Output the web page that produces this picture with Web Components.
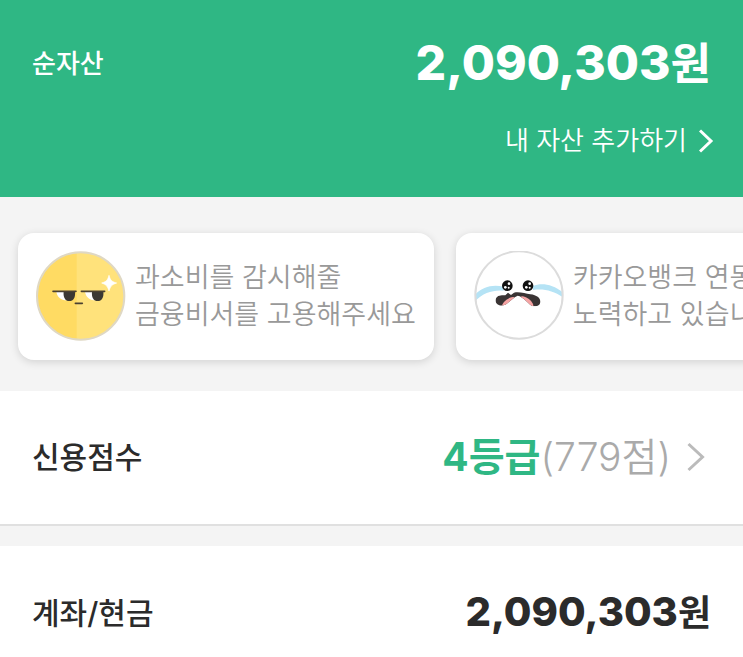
<!DOCTYPE html>
<html lang="ko">
<head>
<meta charset="utf-8">
<meta name="viewport" content="width=device-width, initial-scale=1">
<title>내 자산</title>
<style>
    body {
        margin: 0;
        background: #f4f4f4;
        color: #2b2b2b;
        font-family: Inter, "Noto Sans CJK KR", sans-serif;
    }
</style>
</head>
<body>
<asset-page></asset-page>

<script>
////////////////////////////
// StaticElement
////////////////////////////

class StaticElement extends HTMLElement {
    constructor() {
        super();
        this.attachShadow({ mode: 'open' });
    }

    connectedCallback() {
        this.shadowRoot.innerHTML = `<style>${this.style()}</style>${this.render()}`;
    }

    style() {
        return '';
    }

    render() {
        return '';
    }
}

////////////////////////////
// ChevronIcon
////////////////////////////

class ChevronIcon extends StaticElement {
    style() {
        return `
            :host { display: block; flex: none; width: 16px; height: 24px; }
            :host([large]) { width: 24px; height: 30px; }
            svg { display: block; width: 100%; height: 100%; }
        `;
    }

    render() {
        if (this.hasAttribute('large')) {
            return `<svg viewBox="0 0 24 30" aria-hidden="true">
                <path d="M1.500 2L15.500 15L1.500 28" fill="none" stroke="#bbb" stroke-width="3"/>
            </svg>`;
        }
        return `<svg viewBox="0 0 16 24" aria-hidden="true">
            <path d="M1 1.500L12 12L1 22.500" fill="none" stroke="currentColor" stroke-width="3"/>
        </svg>`;
    }
}

customElements.define('chevron-icon', ChevronIcon);

////////////////////////////
// FaceIcon
////////////////////////////

const faces = {
    smug: `<svg viewBox="18 21 270 270" aria-hidden="true">
        <circle cx="152" cy="156" r="131" fill="#ffe27b"/>
        <path d="M140 25.500A131 131 0 0 0 140 286.500Z" fill="#ffdb63"/>
        <circle cx="152" cy="156" r="131" fill="none" stroke="#dfd8c4" stroke-width="6"/>
        <path d="M79 143H134C134 158 125 169 110 169C93 169 81 158 79 143Z" fill="#fff"/>
        <path d="M101 143H135C137 160 130 171 118 171C106 171 99 160 101 143Z" fill="#3b3833"/>
        <path d="M165 143H219C219 158 210 169 195 169C179 169 167 158 165 143Z" fill="#fff"/>
        <path d="M186 143H220C222 160 215 171 203 171C191 171 184 160 186 143Z" fill="#3b3833"/>
        <path d="M69 142H138M154 142H224M136 178H157" fill="none" stroke="#4a4030" stroke-width="5" stroke-linecap="round"/>
        <path d="M237 94C241 109 245 113 260 117C245 122 241 127 237 141C233 127 229 122 215 117C229 113 233 109 237 94Z" fill="#fff" stroke="#fff" stroke-width="2"/>
    </svg>`,
    crying: `<svg viewBox="17 20 270 270" aria-hidden="true">
        <clipPath id="face"><circle cx="152" cy="152" r="131"/></clipPath>
        <clipPath id="mouth"><path d="M82 166C84 153 99 152 111 153L119 145L128 152L137 145C153 141 171 148 186 150C206 152 217 162 216 173C215 186 200 188 190 184C178 177 165 157 148 154C136 158 125 172 111 181C98 187 80 182 82 166Z"/></clipPath>
        <circle cx="152" cy="152" r="131" fill="#fff"/>
        <g clip-path="url(#face)" fill="#b5e3f5">
            <path d="M15 157C38 127 72 119 106 127V139C74 136 42 146 18 173Z"/>
            <path d="M194 125C220 114 255 119 290 149V163C258 140 228 132 194 137Z"/>
        </g>
        <circle cx="152" cy="152" r="131" fill="none" stroke="#dcdcdc" stroke-width="6"/>
        <circle cx="117" cy="124" r="16" fill="#111"/>
        <circle cx="179" cy="124" r="16" fill="#111"/>
        <g fill="#fff">
            <circle cx="122" cy="118" r="4"/><circle cx="111" cy="129" r="4"/><circle cx="121" cy="130" r="3"/>
            <circle cx="184" cy="118" r="4"/><circle cx="174" cy="129" r="4"/><circle cx="184" cy="130" r="3"/>
        </g>
        <g clip-path="url(#mouth)">
            <path d="M78 138H222V192H78Z" fill="#3a3434"/>
            <ellipse cx="121" cy="175" rx="24" ry="11" transform="rotate(-38 121 175)" fill="#f5a3a3"/>
            <ellipse cx="175" cy="173" rx="24" ry="11" transform="rotate(38 175 173)" fill="#f5a3a3"/>
        </g>
    </svg>`,
};

class FaceIcon extends StaticElement {
    style() {
        return `
            :host { display: block; flex: none; width: 90px; height: 90px; }
            svg { display: block; width: 100%; height: 100%; }
        `;
    }

    render() {
        return faces[this.getAttribute('name')];
    }
}

customElements.define('face-icon', FaceIcon);

////////////////////////////
// AssetHeader
////////////////////////////

class AssetHeader extends StaticElement {
    style() {
        return `
            :host { display: block; background: #2fb784; color: #fff; padding: 31px 28px 38px 32px; }
            .top { display: flex; align-items: center; justify-content: space-between; padding-right: 4px; }
            ::slotted(h1) { margin: 0; font-size: 26px; line-height: 64px; font-weight: 500; }
            .link { display: flex; justify-content: flex-end; margin-top: 26px; }
        `;
    }

    render() {
        return `
            <div class="top"><slot name="label"></slot><slot name="amount"></slot></div>
            <div class="link"><slot name="link"></slot></div>
        `;
    }
}

customElements.define('asset-header', AssetHeader);

////////////////////////////
// MoneyAmount
////////////////////////////

class MoneyAmount extends StaticElement {
    style() {
        return `
            :host { display: block; font-size: 40px; line-height: 48px; font-weight: 800; white-space: nowrap; }
            :host([large]) { font-size: 48px; line-height: 64px; }
            .unit { font-size: 36px; font-weight: 700; }
            :host([large]) .unit { font-size: 44px; }
        `;
    }

    render() {
        return `<slot></slot><span class="unit">원</span>`;
    }
}

customElements.define('money-amount', MoneyAmount);

////////////////////////////
// TipCard
////////////////////////////

class TipCard extends StaticElement {
    style() {
        return `
            :host {
                display: flex;
                flex: none;
                align-items: center;
                gap: 9px;
                box-sizing: border-box;
                padding: 18px 18px 19px;
                border-radius: 16px;
                background: #fff;
                box-shadow: 0 2px 8px rgba(0, 0, 0, 0.14);
                color: #999;
            }
            p { margin: 0; font-size: 27px; line-height: 37px; font-weight: 350; white-space: nowrap; }
        `;
    }

    render() {
        return `<face-icon name="${this.getAttribute('face')}"></face-icon><p><slot></slot></p>`;
    }
}

customElements.define('tip-card', TipCard);

////////////////////////////
// TipStrip
////////////////////////////

class TipStrip extends StaticElement {
    style() {
        return `
            :host {
                display: flex;
                gap: 22px;
                padding: 36px 18px 31px;
                overflow-x: auto;
                scrollbar-width: none;
            }
        `;
    }

    render() {
        return `<slot></slot>`;
    }
}

customElements.define('tip-strip', TipStrip);

////////////////////////////
// AssetRow
////////////////////////////

class AssetRow extends StaticElement {
    style() {
        return `
            :host {
                display: flex;
                align-items: center;
                justify-content: space-between;
                padding: 42px 32px 43px;
                background: #fff;
                border-bottom: 2px solid #e0e0e0;
                margin-bottom: 20px;
            }
            :host(:last-of-type) { padding-bottom: 21px; border-bottom: 0; margin-bottom: 0; }
            ::slotted(h2) { margin: 0; font-size: 30px; line-height: 48px; font-weight: 500; }
        `;
    }

    render() {
        return `<slot name="label"></slot><slot></slot>`;
    }
}

customElements.define('asset-row', AssetRow);

////////////////////////////
// AssetPage
////////////////////////////

class AssetPage extends StaticElement {
    style() {
        return `
            :host { display: block; overflow: hidden; }
            a { display: flex; align-items: center; color: inherit; text-decoration: none; white-space: nowrap; }
            .add { gap: 12px; font-size: 26px; line-height: 37px; font-weight: 350; }
            .score { gap: 16px; font-size: 39px; line-height: 48px; font-weight: 350; color: #aaa; }
            .score strong { font-weight: 700; color: #2fb784; }
        `;
    }

    render() {
        return `
            <asset-header>
                <h1 slot="label">순자산</h1>
                <money-amount slot="amount" large>2,090,303</money-amount>
                <a slot="link" class="add" href="#add">내 자산 추가하기<chevron-icon></chevron-icon></a>
            </asset-header>
            <tip-strip>
                <tip-card face="smug">과소비를 감시해줄<br>금융비서를 고용해주세요</tip-card>
                <tip-card face="crying">카카오뱅크 연동<br>노력하고 있습니다</tip-card>
            </tip-strip>
            <asset-row>
                <h2 slot="label">신용점수</h2>
                <a class="score" href="#score"><span><strong>4등급</strong>(779점)</span><chevron-icon large></chevron-icon></a>
            </asset-row>
            <asset-row>
                <h2 slot="label">계좌/현금</h2>
                <money-amount>2,090,303</money-amount>
            </asset-row>
        `;
    }
}

customElements.define('asset-page', AssetPage);
</script>
</body>
</html>
